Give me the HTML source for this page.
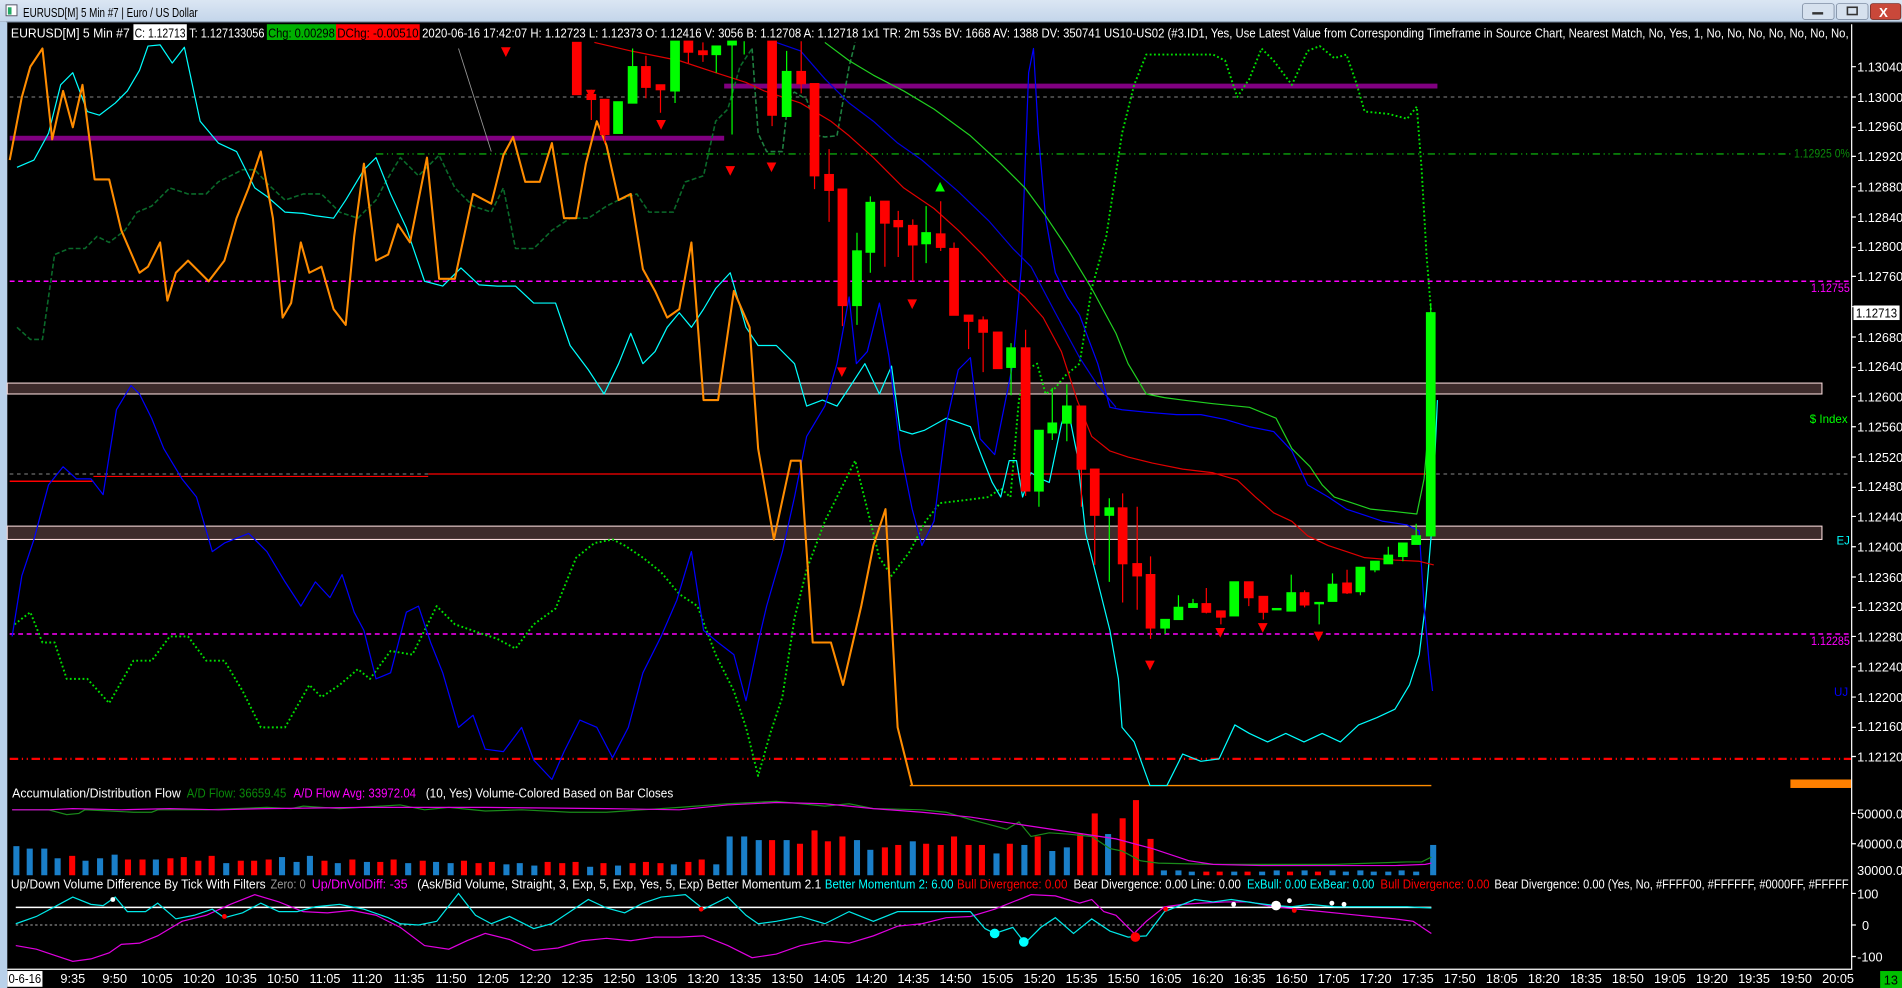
<!DOCTYPE html>
<html><head><meta charset="utf-8"><style>
html,body{margin:0;padding:0;background:#000;overflow:hidden}
svg{display:block}
text{font-family:"Liberation Sans",sans-serif;font-size:10.5px}
</style></head><body>
<svg width="1902" height="988" viewBox="0 0 1568 815" preserveAspectRatio="none" xmlns="http://www.w3.org/2000/svg">
<rect width="1568" height="815" fill="#000"/>
<defs><linearGradient id="tb" x1="0" y1="0" x2="0" y2="1"><stop offset="0" stop-color="#dbe6f3"/><stop offset="1" stop-color="#c3d5ea"/></linearGradient></defs>
<rect x="0" y="0" width="1568" height="18" fill="url(#tb)"/>
<rect x="0" y="18" width="6" height="797" fill="#b9d1ea"/>
<rect x="5" y="17.5" width="1563" height="1" fill="#8a9bb0"/>
<rect x="5" y="4" width="9" height="9" fill="#fff" stroke="#556" stroke-width="0.8"/><rect x="6.5" y="6" width="3" height="6" fill="#2a6"/>
<text x="19" y="14" fill="#000" textLength="144" lengthAdjust="spacingAndGlyphs">EURUSD[M]  5 Min   #7 | Euro / US Dollar</text>
<rect x="1486" y="3" width="26" height="13" rx="2" fill="#d6e1ee" stroke="#7f8ea3" stroke-width="0.7"/><rect x="1494" y="10" width="9" height="2" fill="#333"/>
<rect x="1514" y="3" width="26" height="13" rx="2" fill="#d6e1ee" stroke="#7f8ea3" stroke-width="0.7"/><rect x="1523" y="6" width="8" height="6" fill="none" stroke="#333" stroke-width="1.3"/>
<rect x="1542" y="3" width="25" height="13" rx="2" fill="#c9483a" stroke="#7a2a22" stroke-width="0.7"/><text x="1549" y="14" fill="#fff" style="font-size:11px;font-weight:bold">X</text>

<!-- info line -->
<rect x="110" y="20" width="44" height="13" fill="#fff"/>
<rect x="220" y="20" width="57" height="13" fill="#00b000"/>
<rect x="277" y="20" width="69" height="13" fill="#f00"/>
<text x="9" y="31" fill="#fff" textLength="98" lengthAdjust="spacingAndGlyphs">EURUSD[M]  5 Min   #7</text>
<text x="111" y="31" fill="#000" textLength="42" lengthAdjust="spacingAndGlyphs">C: 1.12713</text>
<text x="156" y="31" fill="#fff" textLength="62" lengthAdjust="spacingAndGlyphs">T: 1.127133056</text>
<text x="221" y="31" fill="#000" textLength="55" lengthAdjust="spacingAndGlyphs">Chg: 0.00298</text>
<text x="278" y="31" fill="#000" textLength="67" lengthAdjust="spacingAndGlyphs">DChg: -0.00510</text>
<text x="348" y="31" fill="#fff" textLength="1176" lengthAdjust="spacingAndGlyphs">2020-06-16 17:42:07 H: 1.12723 L: 1.12373 O: 1.12416 V: 3056 B: 1.12708 A: 1.12718 1x1 TR: 2m 53s BV: 1668 AV: 1388 DV: 350741 US10-US02   (#3.ID1, Yes, Use Latest Value from Corresponding Timeframe in Source Chart, Nearest Match, No, Yes, 1, No, No, No, No, No, No, No,</text>

<!-- axis -->
<line x1="1526.5" y1="20" x2="1526.5" y2="800" stroke="#fff" stroke-width="1"/>
<g fill="#fff" style="font-size:10.5px">
<text x="1531" y="59">1.13040</text><text x="1531" y="84">1.13000</text><text x="1531" y="108">1.12960</text><text x="1531" y="133">1.12920</text><text x="1531" y="158">1.12880</text><text x="1531" y="183">1.12840</text><text x="1531" y="207">1.12800</text><text x="1531" y="232">1.12760</text><text x="1531" y="282">1.12680</text><text x="1531" y="306">1.12640</text><text x="1531" y="331">1.12600</text><text x="1531" y="356">1.12560</text><text x="1531" y="381">1.12520</text><text x="1531" y="405">1.12480</text><text x="1531" y="430">1.12440</text><text x="1531" y="455">1.12400</text><text x="1531" y="480">1.12360</text><text x="1531" y="504">1.12320</text><text x="1531" y="529">1.12280</text><text x="1531" y="554">1.12240</text><text x="1531" y="579">1.12200</text><text x="1531" y="603">1.12160</text><text x="1531" y="628">1.12120</text>
<text x="1531" y="675">50000.00</text><text x="1531" y="700">40000.00</text><text x="1531" y="722">30000.00</text>
<text x="1531" y="741">100</text><text x="1535" y="767">0</text><text x="1531" y="793">-100</text>
</g>
<g stroke="#fff" stroke-width="1">
<path d="M1526 55h4M1526 80h4M1526 105h4M1526 129h4M1526 154h4M1526 179h4M1526 204h4M1526 228h4M1526 253h4M1526 278h4M1526 303h4M1526 327h4M1526 352h4M1526 377h4M1526 402h4M1526 426h4M1526 451h4M1526 476h4M1526 501h4M1526 525h4M1526 550h4M1526 575h4M1526 600h4M1526 624h4M1526 671h4M1526 696h4M1526 737h4M1526 763h4M1526 789h4"/>
</g>
<rect x="1528" y="252" width="38" height="12" fill="#fff"/><text x="1530" y="262" fill="#000" textLength="34" lengthAdjust="spacingAndGlyphs">1.12713</text>

<!-- horizontal levels -->
<line x1="8" y1="80" x2="1526" y2="80" stroke="#888" stroke-dasharray="3,3" stroke-width="0.8"/>
<line x1="8" y1="391" x2="1526" y2="391" stroke="#888" stroke-dasharray="3,3" stroke-width="0.8"/>
<line x1="310" y1="127" x2="1478" y2="127" stroke="#0a8a0a" stroke-width="1.3" stroke-dasharray="6,3,1,3,1,3"/>
<text x="1479" y="130" fill="#0a8a0a" style="font-size:9.5px" textLength="46" lengthAdjust="spacingAndGlyphs">1.12925 0%</text>
<line x1="8" y1="232" x2="1526" y2="232" stroke="#f0f" stroke-width="1.3" stroke-dasharray="4,3"/>
<text x="1493" y="241" fill="#f0f" style="font-size:9.5px" textLength="32" lengthAdjust="spacingAndGlyphs">1.12755</text>
<line x1="8" y1="523" x2="1526" y2="523" stroke="#f0f" stroke-width="1.3" stroke-dasharray="4,3"/>
<text x="1493" y="532" fill="#f0f" style="font-size:9.5px" textLength="32" lengthAdjust="spacingAndGlyphs">1.12285</text>
<line x1="8" y1="626" x2="1526" y2="626" stroke="#f00" stroke-width="1.8" stroke-dasharray="7,3,1,3,1,3"/>
<rect x="6" y="316" width="1496" height="9" fill="#3d2b2b" stroke="#f3d6d6" stroke-width="0.9"/>
<rect x="6" y="434" width="1496" height="11" fill="#3d2b2b" stroke="#f3d6d6" stroke-width="0.9"/>
<text x="1492" y="349" fill="#0f0" style="font-size:9.5px">$ Index</text>
<text x="1514" y="449" fill="#0ff" style="font-size:9.5px">EJ</text>
<text x="1512" y="574" fill="#00f" style="font-size:9.5px">UJ</text>
<rect x="1476" y="643" width="50" height="7" fill="#ff8000"/>
<line x1="8" y1="397" x2="77" y2="397" stroke="#f00" stroke-width="1.2"/>
<line x1="77" y1="393" x2="353" y2="393" stroke="#f00" stroke-width="1"/>
<line x1="353" y1="391" x2="1180" y2="391" stroke="#f00" stroke-width="1"/>
<rect x="8" y="112" width="589" height="4" fill="#800080"/>
<rect x="597" y="69" width="588" height="4" fill="#800080"/>
<line x1="750" y1="648" x2="1180" y2="648" stroke="#ff8c00" stroke-width="1.2"/>
<line x1="378" y1="40" x2="405" y2="125" stroke="#999" stroke-width="0.7"/>

<!-- indicator lines -->
<g fill="none" stroke-linejoin="round">
<polyline stroke="#0a6a2a" stroke-width="1.3" stroke-dasharray="4,2" points="14,270 25,280 35,280 45,210 57,205 70,205 80,195 90,200 103,190 113,175 125,170 140,155 155,160 170,160 180,150 190,145 200,140 210,140 222,153 235,165 250,160 265,160 280,175 295,180 310,165 318,150 330,130 345,145 362,128 375,155 390,170 405,175 415,155 425,205 440,205 455,190 470,180 485,180 500,170 510,165 525,160 535,175 555,175 565,150 580,145 590,100 600,90 610,55 620,40"/>
<polyline stroke="#1e8040" stroke-width="1.3" stroke-dasharray="4,2" points="620,40 625,110 632,125 645,125 650,80 655,76 665,82 675,112 680,113 690,112 700,55 705,35"/>
<polyline stroke="#00e000" stroke-width="1.6" stroke-dasharray="1.5,2" points="12,515 25,505 35,530 45,530 55,560 72,560 90,580 110,545 125,545 140,525 155,525 170,545 185,545 200,570 215,600 235,600 255,565 265,575 280,565 295,552 305,560 322,537 340,540 360,500 375,515 395,522 410,527 425,535 440,515 458,502 475,460 490,448 505,445 515,450 530,460 545,472 560,490 575,500 590,540 605,570 615,600 625,640 635,605 645,575 655,510 665,470 680,430 695,400 705,380 715,420 725,460 735,475 750,455 763,430 775,415 800,412 815,410 825,403 833,410 840,330 846,305 855,300 862,325 870,320 878,310 890,300 900,238 912,195 925,110 935,70 945,45 960,45 985,45 1000,45 1010,50 1020,80 1030,65 1040,40 1050,50 1065,70 1078,42 1088,38 1100,48 1110,45 1118,68 1125,92 1145,94 1160,98 1168,88 1172,140 1176,210 1180,260"/>
<polyline stroke="#00ffff" stroke-width="1" points="14,138 28,132 40,110 50,70 60,60 72,92 82,95 95,85 105,75 115,58 122,38 132,37 142,52 152,39 165,100 180,118 195,125 210,155 220,162 235,175 250,176 260,178 275,180 285,165 300,140 310,130 322,160 335,188 350,232 365,236 380,221 395,235 410,236 425,236 440,250 458,250 470,285 485,305 498,325 510,300 520,275 530,300 540,290 550,270 560,258 570,270 580,255 590,238 602,225 615,270 625,285 640,285 655,300 665,335 678,330 690,335 700,320 713,300 725,325 735,302 742,355 752,358 762,355 780,345 800,352 810,378 818,398 825,410 832,380 838,380 843,410 850,390 858,395 865,398 875,350 880,335 888,375 895,440 905,480 915,520 922,560 925,600 935,612 948,648 962,648 975,622 990,628 1005,626 1018,598 1030,605 1045,612 1060,605 1075,612 1090,605 1105,612 1120,598 1135,592 1150,585 1162,565 1170,540 1175,500 1180,440 1185,330"/>
<polyline stroke="#0000ff" stroke-width="1" points="10,525 18,475 28,445 40,400 52,385 63,395 75,395 85,408 96,338 108,318 115,325 125,345 135,370 150,395 162,410 175,455 185,448 205,440 220,455 235,480 248,500 260,480 272,493 282,474 292,505 300,520 310,560 322,555 335,505 345,500 355,530 365,555 378,600 390,590 400,618 415,620 430,600 440,627 455,643 465,620 478,594 492,600 505,625 518,600 530,555 545,525 558,495 570,455 580,520 592,530 605,540 615,578 625,530 632,500 645,455 655,410 665,360 680,335 690,300 700,245 706,300 715,290 725,250 733,295 742,370 752,420 760,450 770,430 780,350 790,305 800,295 808,362 820,375 835,300 842,220 848,60 852,40 856,110 862,180 870,225 880,245 890,260 905,300 915,336 925,338 945,340 970,342 990,342 1010,346 1030,352 1050,356 1065,372 1078,400 1095,410 1110,420 1125,425 1140,430 1160,433 1170,438 1174,500 1178,545 1181,570"/>
<polyline stroke="#0000dd" stroke-width="1" points="640,35 660,42 680,65 700,85 720,100 740,118 760,132 790,158 815,182 835,205 850,220 870,258 890,295 905,318 920,336"/>
<polyline stroke="#20d020" stroke-width="1" points="680,35 700,50 720,62 745,75 770,90 800,112 825,135 845,155 862,178 880,205 900,238 920,275 930,300 945,325 960,328 975,330 1000,333 1030,336 1052,345 1065,370 1080,385 1090,400 1100,410 1115,415 1130,420 1150,422 1168,424 1174,395 1177,360"/>
<polyline stroke="#e00000" stroke-width="1" points="490,35 520,42 560,50 590,60 615,68 630,75 660,85 685,100 700,112 720,130 745,155 770,172 790,190 810,210 830,232 845,245 860,262 875,290 888,330 900,360 915,372 930,377 950,382 975,387 1000,390 1020,396 1035,410 1050,423 1065,430 1078,442 1095,450 1110,455 1125,460 1150,462 1170,463 1182,466"/>
<polyline stroke="#ff8c00" stroke-width="1.7" points="8,132 18,80 25,55 35,40 43,115 52,75 60,105 68,70 78,148 90,148 100,190 115,225 122,220 132,200 138,248 145,225 155,215 172,232 185,215 195,180 205,155 215,125 225,180 233,262 240,250 248,200 255,225 265,220 275,255 285,268 292,195 300,135 310,215 320,210 328,185 338,200 346,160 352,130 362,230 375,230 390,160 405,168 415,128 423,113 433,150 445,150 455,118 465,180 475,180 483,135 492,100 500,120 510,165 520,160 530,222 540,240 550,262 560,255 570,200 580,330 592,330 605,240 618,270 625,370 638,445 652,380 660,380 670,530 685,530 695,565 710,500 720,450 730,420 740,600 752,648"/>
</g>

<!-- candles -->
<g stroke-width="1">
<g fill="#f00" stroke="#f00">
<path d="M487.5 74V99M498.5 82V118M532.5 46V81M544.5 70V93M567.5 34V52M579.5 35V51M636.5 34V104M660.5 34V77M671.5 69V156M683.5 123V183M694.5 156V269M729.5 166V220M740.5 174V212M752.5 181V232M775.5 166V207M786.5 200V260M798.5 260V288M810.5 261V307M822.5 274V304M845.5 272V409M891.5 335V418M902.5 387V466M925.5 407V497M937.5 418V503M948.5 459V527M994.5 485V506M1006.5 504V515M1029.5 480V500M1041.5 492V511M1075.5 487V501M1110.5 470V490"/>
<rect x="472" y="35" width="7" height="43"/><rect x="484" y="78" width="7" height="4"/><rect x="495" y="82" width="7" height="29"/><rect x="529" y="55" width="7" height="17"/><rect x="541" y="70" width="7" height="4"/><rect x="564" y="34" width="7" height="9"/><rect x="576" y="42" width="7" height="3"/><rect x="633" y="34" width="7" height="61"/><rect x="657" y="59" width="7" height="10"/><rect x="668" y="69" width="7" height="76"/><rect x="680" y="144" width="7" height="13"/><rect x="691" y="156" width="7" height="96"/><rect x="726" y="166" width="7" height="18"/><rect x="737" y="182" width="7" height="5"/><rect x="749" y="186" width="7" height="16"/><rect x="772" y="193" width="7" height="11"/><rect x="783" y="205" width="7" height="55"/><rect x="795" y="260" width="7" height="5"/><rect x="807" y="264" width="7" height="10"/><rect x="819" y="274" width="7" height="30"/><rect x="842" y="287" width="7" height="118"/><rect x="888" y="335" width="7" height="52"/><rect x="899" y="387" width="7" height="38"/><rect x="922" y="419" width="7" height="46"/><rect x="934" y="465" width="7" height="10"/><rect x="945" y="474" width="7" height="44"/><rect x="991" y="498" width="7" height="7"/><rect x="1003" y="504" width="7" height="5"/><rect x="1026" y="480" width="7" height="13"/><rect x="1038" y="492" width="7" height="13"/><rect x="1072" y="489" width="7" height="10"/><rect x="1107" y="481" width="7" height="8"/>
</g>
<g fill="#0f0" stroke="#0f0">
<path d="M521.5 40V85M556.5 34V85M590.5 38V60M603.5 34V111M613.5 34V45M648.5 42V96M706.5 192V268M717.5 162V225M763.5 170V217M833.5 283V326M856.5 355V418M867.5 320V363M879.5 317V364M914.5 411V480M960.5 511V523M971.5 491V511M983.5 494V501M1052.5 503V503M1064.5 474V504M1087.5 497V515M1098.5 473V496M1121.5 468V491M1133.5 463V472M1144.5 451V465M1156.5 448V463M1167.5 432V449M1179.5 250V442"/>
<rect x="506" y="84" width="7" height="26"/><rect x="518" y="55" width="7" height="30"/><rect x="553" y="34" width="7" height="41"/><rect x="587" y="38" width="7" height="7"/><rect x="600" y="34" width="7" height="3"/><rect x="645" y="59" width="7" height="37"/><rect x="703" y="207" width="7" height="45"/><rect x="714" y="167" width="7" height="41"/><rect x="760" y="192" width="7" height="9"/><rect x="830" y="287" width="7" height="16"/><rect x="853" y="355" width="7" height="50"/><rect x="864" y="349" width="7" height="8"/><rect x="876" y="335" width="7" height="14"/><rect x="911" y="419" width="7" height="6"/><rect x="957" y="511" width="7" height="7"/><rect x="968" y="501" width="7" height="10"/><rect x="980" y="498" width="7" height="3"/><rect x="1049" y="502" width="7" height="1"/><rect x="1014" y="480" width="7" height="28"/><rect x="1061" y="489" width="7" height="15"/><rect x="1084" y="497" width="7" height="1"/><rect x="1095" y="482" width="7" height="14"/><rect x="1118" y="468" width="7" height="20"/><rect x="1130" y="463" width="7" height="7"/><rect x="1141" y="458" width="7" height="7"/><rect x="1153" y="448" width="7" height="11"/><rect x="1164" y="442" width="7" height="7"/><rect x="1176" y="258" width="7" height="184"/>
</g>
</g>
<g fill="#f00">
<path d="M413 39h8l-4 8z M483 74h8l-4 8z M541 99h8l-4 8z M598 137h8l-4 8z M632 134h8l-4 8z M690 303h8l-4 8z M748 247h8l-4 8z M944 545h8l-4 8z M1002 518h8l-4 8z M1037 514h8l-4 8z M1083 521h8l-4 8z"/>
</g>
<path d="M771 158h8l-4 -8z" fill="#0f0"/>

<!-- volume panel -->
<text x="10" y="658" fill="#fff" textLength="139" lengthAdjust="spacingAndGlyphs">Accumulation/Distribution Flow</text>
<text x="154" y="658" fill="#0a8a0a" textLength="82" lengthAdjust="spacingAndGlyphs">A/D Flow: 36659.45</text>
<text x="242" y="658" fill="#f0f" textLength="101" lengthAdjust="spacingAndGlyphs">A/D Flow Avg: 33972.04</text>
<text x="351" y="658" fill="#fff" textLength="204" lengthAdjust="spacingAndGlyphs">(10, Yes)  Volume-Colored Based on Bar Closes</text>
<g fill="#1a7fc9">
<rect x="11" y="698" width="5" height="24"/><rect x="22" y="700" width="5" height="22"/><rect x="34" y="700" width="5" height="22"/><rect x="45" y="708" width="5" height="14"/><rect x="68" y="710" width="5" height="12"/><rect x="80" y="708" width="5" height="14"/><rect x="92" y="705" width="5" height="17"/><rect x="126" y="709" width="5" height="13"/><rect x="184" y="712" width="5" height="10"/><rect x="230" y="707" width="5" height="15"/><rect x="242" y="711" width="5" height="11"/><rect x="253" y="706" width="5" height="16"/><rect x="276" y="712" width="5" height="10"/><rect x="300" y="711" width="5" height="11"/><rect x="334" y="712" width="5" height="10"/><rect x="357" y="711" width="5" height="11"/><rect x="369" y="712" width="5" height="10"/><rect x="415" y="713" width="5" height="9"/><rect x="426" y="712" width="5" height="10"/><rect x="438" y="714" width="5" height="8"/><rect x="484" y="715" width="5" height="7"/><rect x="507" y="714" width="5" height="8"/><rect x="553" y="713" width="5" height="9"/><rect x="588" y="713" width="5" height="9"/><rect x="599" y="690" width="5" height="32"/><rect x="611" y="690" width="5" height="32"/><rect x="623" y="693" width="5" height="29"/><rect x="646" y="693" width="5" height="29"/><rect x="704" y="693" width="5" height="29"/><rect x="715" y="701" width="5" height="21"/><rect x="750" y="694" width="5" height="28"/><rect x="819" y="704" width="5" height="18"/><rect x="842" y="697" width="5" height="25"/><rect x="865" y="702" width="5" height="20"/><rect x="877" y="699" width="5" height="23"/><rect x="911" y="688" width="5" height="34"/><rect x="1179" y="697" width="5" height="25"/>
<rect x="957" y="718" width="5" height="4"/><rect x="969" y="718" width="5" height="4"/><rect x="980" y="719" width="5" height="3"/><rect x="1015" y="719" width="5" height="3"/><rect x="1038" y="719" width="5" height="3"/><rect x="1050" y="718" width="5" height="4"/><rect x="1073" y="718" width="5" height="4"/><rect x="1096" y="718" width="5" height="4"/><rect x="1107" y="719" width="5" height="3"/><rect x="1119" y="718" width="5" height="4"/><rect x="1130" y="719" width="5" height="3"/><rect x="1142" y="719" width="5" height="3"/><rect x="1153" y="718" width="5" height="4"/><rect x="1165" y="719" width="5" height="3"/>
</g>
<g fill="#f00">
<rect x="57" y="706" width="5" height="16"/><rect x="103" y="709" width="5" height="13"/><rect x="115" y="709" width="5" height="13"/><rect x="138" y="708" width="5" height="14"/><rect x="149" y="707" width="5" height="15"/><rect x="161" y="710" width="5" height="12"/><rect x="172" y="706" width="5" height="16"/><rect x="196" y="710" width="5" height="12"/><rect x="207" y="710" width="5" height="12"/><rect x="219" y="709" width="5" height="13"/><rect x="265" y="710" width="5" height="12"/><rect x="288" y="709" width="5" height="13"/><rect x="311" y="711" width="5" height="11"/><rect x="322" y="709" width="5" height="13"/><rect x="346" y="710" width="5" height="12"/><rect x="380" y="710" width="5" height="12"/><rect x="392" y="712" width="5" height="10"/><rect x="403" y="711" width="5" height="11"/><rect x="449" y="711" width="5" height="11"/><rect x="461" y="712" width="5" height="10"/><rect x="472" y="711" width="5" height="11"/><rect x="495" y="712" width="5" height="10"/><rect x="519" y="712" width="5" height="10"/><rect x="530" y="711" width="5" height="11"/><rect x="542" y="712" width="5" height="10"/><rect x="565" y="711" width="5" height="11"/><rect x="576" y="709" width="5" height="13"/><rect x="634" y="693" width="5" height="29"/><rect x="657" y="696" width="5" height="26"/><rect x="669" y="685" width="5" height="37"/><rect x="680" y="694" width="5" height="28"/><rect x="692" y="690" width="5" height="32"/><rect x="727" y="699" width="5" height="23"/><rect x="738" y="697" width="5" height="25"/><rect x="761" y="696" width="5" height="26"/><rect x="773" y="697" width="5" height="25"/><rect x="784" y="690" width="5" height="32"/><rect x="796" y="697" width="5" height="25"/><rect x="807" y="697" width="5" height="25"/><rect x="830" y="696" width="5" height="26"/><rect x="853" y="690" width="5" height="32"/><rect x="888" y="688" width="5" height="34"/><rect x="900" y="671" width="5" height="51"/><rect x="923" y="675" width="5" height="47"/><rect x="934" y="660" width="5" height="62"/><rect x="946" y="692" width="5" height="30"/>
<rect x="992" y="719" width="5" height="3"/><rect x="1003" y="719" width="5" height="3"/><rect x="1026" y="719" width="5" height="3"/><rect x="1061" y="719" width="5" height="3"/><rect x="1084" y="719" width="5" height="3"/>
</g>
<g fill="none" stroke-width="1">
<polyline stroke="#1a8a1a" points="10,668 40,668 55,672 65,671 70,668 110,670 125,670 130,668 170,668 220,666 240,667 250,665 280,667 330,664 350,668 370,666 400,669 430,668 470,670 500,670 530,668 560,666 600,663 640,661 680,665 700,663 720,667 760,668 780,670 800,676 815,680 830,684 840,678 850,690 865,687 880,688 900,690 915,700 925,702 940,710 955,712 1000,713 1050,713 1100,713 1160,711 1172,711 1180,707"/>
<polyline stroke="#e000e0" points="10,668 40,668 60,667 100,668 140,667 180,668 220,667 300,666 400,666 500,667 560,668 600,664 640,662 680,663 720,667 760,670 800,674 840,680 880,686 920,692 950,700 980,710 1000,713 1040,714 1100,714 1150,714 1175,713 1180,712"/>
</g>

<!-- momentum panel -->
<text x="9" y="733" fill="#fff" textLength="210" lengthAdjust="spacingAndGlyphs">Up/Down Volume Difference By Tick With Filters</text>
<text x="223" y="733" fill="#999" textLength="29" lengthAdjust="spacingAndGlyphs">Zero: 0</text>
<text x="257" y="733" fill="#f0f" textLength="79" lengthAdjust="spacingAndGlyphs">Up/DnVolDiff: -35</text>
<text x="344" y="733" fill="#fff" textLength="333" lengthAdjust="spacingAndGlyphs">(Ask/Bid Volume, Straight, 3, Exp, 5, Exp, Yes, 5, Exp)  Better Momentum 2.1</text>
<text x="680" y="733" fill="#0ff" textLength="106" lengthAdjust="spacingAndGlyphs">Better Momentum 2: 6.00</text>
<text x="789" y="733" fill="#f00" textLength="91" lengthAdjust="spacingAndGlyphs">Bull Divergence: 0.00</text>
<text x="885" y="733" fill="#fff" textLength="138" lengthAdjust="spacingAndGlyphs">Bear Divergence: 0.00  Line: 0.00</text>
<text x="1028" y="733" fill="#0ff" textLength="105" lengthAdjust="spacingAndGlyphs">ExBull: 0.00  ExBear: 0.00</text>
<text x="1138" y="733" fill="#f00" textLength="90" lengthAdjust="spacingAndGlyphs">Bull Divergence: 0.00</text>
<text x="1232" y="733" fill="#fff" textLength="292" lengthAdjust="spacingAndGlyphs">Bear Divergence: 0.00   (Yes, No, #FFFF00, #FFFFFF, #0000FF, #FFFFF</text>
<line x1="13" y1="748.5" x2="1180" y2="748.5" stroke="#fff" stroke-width="1.2"/>
<line x1="13" y1="763" x2="1180" y2="763" stroke="#aaa" stroke-width="0.8" stroke-dasharray="2,2"/>
<g fill="none" stroke-width="1">
<polyline stroke="#e000e0" points="13,780 30,783 45,788 60,793 75,791 90,786 100,779 115,778 130,772 150,760 170,755 190,746 210,738 230,744 250,752 270,753 290,751 310,755 330,765 350,780 370,783 385,776 400,770 420,775 440,784 460,782 480,776 500,774 520,776 540,773 560,773 580,772 600,780 620,790 640,787 660,780 680,776 700,778 720,772 740,764 760,762 780,757 800,756 820,750 840,742 850,738 870,739 890,745 900,742 910,752 920,755 935,770 945,760 960,748 975,746 990,745 1010,744 1030,744 1050,748 1070,750 1090,752 1110,754 1130,756 1150,758 1165,760 1180,770"/>
<polyline stroke="#00e8e8" points="13,762 30,756 45,748 60,740 75,746 85,747 95,740 105,752 120,752 130,745 145,758 160,755 175,750 185,757 200,753 215,745 230,752 245,752 260,748 280,746 300,750 320,757 330,762 345,763 360,760 378,737 392,755 405,762 420,756 440,766 455,762 470,752 485,742 500,749 515,753 530,745 545,740 565,738 580,750 600,740 615,755 625,762 640,760 660,756 680,762 700,752 720,760 740,752 760,752 780,752 800,752 812,766 820,770 835,765 845,778 858,765 870,757 885,770 900,758 915,768 930,773 945,772 960,752 970,748 985,742 1000,744 1015,742 1035,745 1052,747 1065,748 1080,746 1100,748 1130,748 1160,748 1180,749"/>
</g>
<g>
<circle cx="93" cy="742" r="2" fill="#fff"/><circle cx="185" cy="756" r="2" fill="#f00"/><circle cx="578" cy="750" r="2" fill="#f00"/>
<circle cx="820" cy="770" r="4" fill="#0ff"/><circle cx="844" cy="777" r="4" fill="#0ff"/><circle cx="936" cy="773" r="4" fill="#f00"/>
<circle cx="961" cy="750" r="2" fill="#f00"/><circle cx="1017" cy="746" r="2" fill="#fff"/><circle cx="1052" cy="747" r="4" fill="#fff"/><circle cx="1063" cy="743" r="2" fill="#fff"/><circle cx="1067" cy="751" r="2" fill="#f00"/><circle cx="1098" cy="745" r="2" fill="#fff"/><circle cx="1108" cy="746" r="2" fill="#fff"/>
</g>

<!-- time axis -->
<line x1="6" y1="799.5" x2="1526" y2="799.5" stroke="#fff" stroke-width="1"/>
<rect x="6" y="801" width="29" height="13" fill="#fff"/><text x="7" y="811" fill="#000" textLength="27" lengthAdjust="spacingAndGlyphs">0-6-16</text>
<g fill="#fff" text-anchor="middle" style="font-size:10px">
<text x="60" y="811">9:35</text><text x="94.6" y="811">9:50</text><text x="129.3" y="811">10:05</text><text x="164" y="811">10:20</text><text x="198.6" y="811">10:35</text><text x="233.2" y="811">10:50</text><text x="267.9" y="811">11:05</text><text x="302.5" y="811">11:20</text><text x="337.2" y="811">11:35</text><text x="371.8" y="811">11:50</text><text x="406.5" y="811">12:05</text><text x="441.1" y="811">12:20</text><text x="475.8" y="811">12:35</text><text x="510.4" y="811">12:50</text><text x="545.1" y="811">13:05</text><text x="579.7" y="811">13:20</text><text x="614.4" y="811">13:35</text><text x="649" y="811">13:50</text><text x="683.7" y="811">14:05</text><text x="718.3" y="811">14:20</text><text x="753" y="811">14:35</text><text x="787.6" y="811">14:50</text><text x="822.3" y="811">15:05</text><text x="856.9" y="811">15:20</text><text x="891.6" y="811">15:35</text><text x="926.2" y="811">15:50</text><text x="960.9" y="811">16:05</text><text x="995.5" y="811">16:20</text><text x="1030.2" y="811">16:35</text><text x="1064.8" y="811">16:50</text><text x="1099.5" y="811">17:05</text><text x="1134.1" y="811">17:20</text><text x="1168.8" y="811">17:35</text><text x="1203.4" y="811">17:50</text><text x="1238.1" y="811">18:05</text><text x="1272.7" y="811">18:20</text><text x="1307.4" y="811">18:35</text><text x="1342" y="811">18:50</text><text x="1376.7" y="811">19:05</text><text x="1411.3" y="811">19:20</text><text x="1446" y="811">19:35</text><text x="1480.6" y="811">19:50</text><text x="1515.3" y="811">20:05</text>
</g>
<rect x="1550" y="801" width="18" height="14" fill="#00c000"/><text x="1553" y="812" fill="#000">13</text>
</svg>
</body></html>
